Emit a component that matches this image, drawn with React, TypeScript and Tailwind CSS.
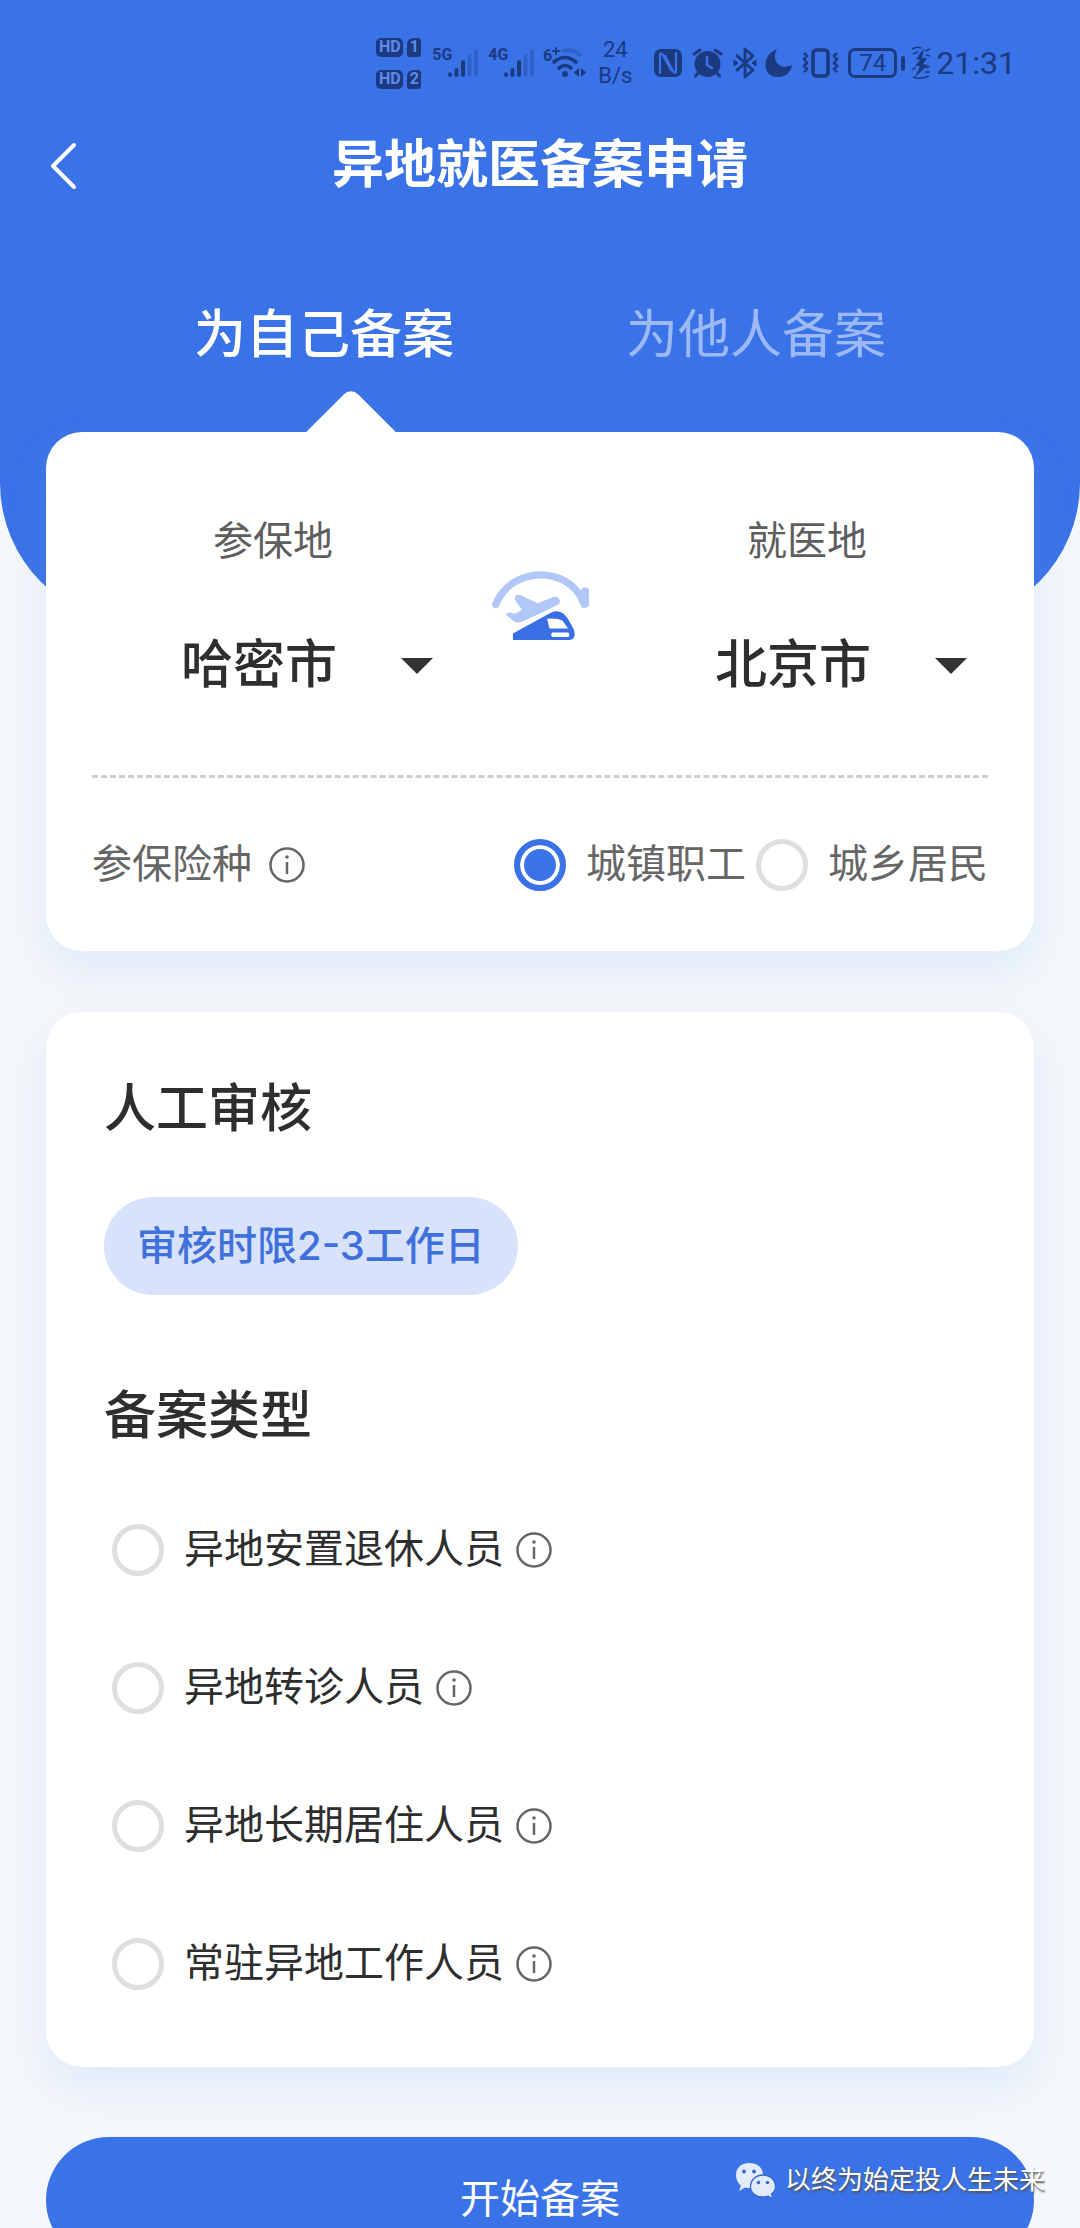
import { useState } from "react";

const INK = "#1b3a80";

function SimBadge({ slot }: { slot: string }) {
  return (
    <div className="flex items-center gap-1 text-[#5f8cec]">
      <span className="flex h-[19px] w-[27px] items-center justify-center rounded-[5px] bg-[#1b3a80] text-[16px] leading-none font-bold">
        HD
      </span>
      <span className="flex h-[19px] w-[14px] items-center justify-center rounded-[3px] rounded-tl-[6px] bg-[#1b3a80] text-[16px] leading-none font-bold">
        {slot}
      </span>
    </div>
  );
}

function Signal({ label }: { label: string }) {
  return (
    <div className="flex w-[47px] items-start">
      <span className="w-[15px] text-[16px] leading-[14px] font-bold">{label}</span>
      <svg width="32" height="30" viewBox="0 0 32 30" aria-hidden="true" strokeWidth="4" strokeLinecap="round" stroke={INK}>
        <path d="M3 26.5V27M9.500 22V27M16 14V27" />
        <path d="M22.500 8V27M29 3V27" opacity=".3" />
      </svg>
    </div>
  );
}

function StatusBar() {
  return (
    <div className="flex h-[126px] items-center justify-end pr-[64px] font-['Roboto',sans-serif] text-[#1b3a80]">
      <div className="mr-[11px] flex flex-col gap-[13px]">
        <SimBadge slot="1" />
        <SimBadge slot="2" />
      </div>
      <div className="mr-[8px] flex gap-[9px]">
        <Signal label="5G" />
        <Signal label="4G" />
      </div>
      <div className="mr-[12px] flex w-[43px] items-start">
        <svg width="43" height="32" viewBox="0 0 43 32" fill="none" stroke={INK} strokeWidth="3.600" strokeLinecap="round" aria-hidden="true">
          <text x="0" y="14" fill={INK} stroke="none" fontSize="16" fontWeight="700">6</text>
          <path d="M13 1V7M10 4H16" strokeWidth="1.800" />
          <path d="M20 4Q30 1 37 8" opacity=".3" />
          <path d="M11 15Q22 6 33 15" />
          <path d="M16 21Q22 16 28 21" />
          <circle cx="22" cy="27" r="3" fill={INK} stroke="none" />
          <path d="M36 21V30L30.500 25.500ZM38 21V30L43 25.500Z" fill={INK} stroke="none" />
        </svg>
      </div>
      <div className="mr-[22px] w-[34px] text-center text-[22px] leading-[26px]">
        24
        <br />
        B/s
      </div>
      <svg className="mr-[10px]" width="28" height="28" viewBox="0 0 28 28" aria-hidden="true">
        <rect width="28" height="28" rx="7" fill={INK} />
        <path d="M6 25V7Q6 2 9 6L17.500 22M22 3V21Q22 26 19 22L10.500 6" fill="none" stroke="#3a72e8" strokeWidth="2.200" strokeLinejoin="round" />
      </svg>
      <svg className="mr-[10px]" width="31" height="30" viewBox="0 0 31 30" aria-hidden="true" strokeLinecap="round" strokeLinejoin="round">
        <circle cx="15.500" cy="16" r="13" fill={INK} />
        <path d="M2 6L8 2M29 6L23 2M6 25L3.500 28M25 25L27.500 28" fill="none" stroke={INK} strokeWidth="3" />
        <path d="M15 9V17L20 20" fill="none" stroke="#3a72e8" strokeWidth="2.600" />
      </svg>
      <svg className="mr-[8px]" width="24" height="32" viewBox="0 0 24 32" fill="none" stroke={INK} strokeWidth="2.800" strokeLinejoin="round" aria-hidden="true">
        <path d="M3 8L20 23L12 30V2L20 9L3 24" />
        <path d="M1 13L5 16L1 19ZM23 13L19 16L23 19Z" fill={INK} strokeWidth="1" />
      </svg>
      <svg className="mr-[9px]" width="28" height="30" viewBox="0 0 28 30" aria-hidden="true">
        <path d="M12 1C-3 6-4 29 13 29C21 29 26 24 27 17C14 23 6 12 12 1Z" fill={INK} />
      </svg>
      <svg className="mr-[9px]" width="37" height="30" viewBox="0 0 37 30" fill="none" stroke={INK} strokeWidth="3.600" strokeLinejoin="round" aria-hidden="true">
        <rect x="11" y="2" width="15" height="26" rx="3.500" />
        <path d="M2 5L5 8L2 11L5 15L2 18L5 21L2 24M35 5L32 8L35 11L32 15L35 18L32 21L35 24" strokeWidth="2.600" />
      </svg>
      <div className="mr-[6px] flex items-center gap-1">
        <span className="flex h-[30px] w-[49px] items-center justify-center rounded-[7px] border-[3px] border-[#1b3a80] text-[24px] leading-none">
          74
        </span>
        <span className="h-[15px] w-[4px] rounded-full bg-[#1b3a80]" />
      </div>
      <svg className="mr-[5px]" width="20" height="34" viewBox="0 0 20 34" aria-hidden="true">
        <path d="M13 2L5 13L9 14L4 20H9L7 25L3 32L17 19L12 18L16 12L11 12Z" fill={INK} />
        <path d="M1 3Q6 0 10 2M2 8L7 6M1 24L5 21M2 31Q9 34 18 30M15 22L19 20M14 26L19 26M15 9L19 10M14 5L19 3" fill="none" stroke={INK} strokeWidth="1.500" />
      </svg>
      <time className="text-[32px] leading-none">21:31</time>
    </div>
  );
}

function InfoButton({ about }: { about: string }) {
  return (
    <button type="button" aria-label={`${about}说明`} className="shrink-0 text-[#666]">
      <svg width="38" height="38" viewBox="0 0 38 38" fill="none" stroke="currentColor" aria-hidden="true">
        <circle cx="19" cy="19" r="16.500" strokeWidth="2.500" />
        <path d="M19 16V28" strokeWidth="2.500" />
        <circle cx="19" cy="11" r="1.800" fill="currentColor" stroke="none" />
      </svg>
    </button>
  );
}

type RadioProps = {
  name: string;
  label: string;
  checked: boolean;
  onSelect: () => void;
};

function Radio({ name, label, checked, onSelect }: RadioProps) {
  return (
    <label className="flex items-center gap-5 whitespace-nowrap">
      <input
        type="radio"
        name={name}
        checked={checked}
        onChange={onSelect}
        className="size-[52px] shrink-0 appearance-none rounded-full border-[5px] border-[#dddfe1] bg-white checked:border-[6px] checked:border-[#3a72e8] checked:bg-[#3a72e8] checked:shadow-[inset_0_0_0_4px_#fff]"
      />
      {label}
    </label>
  );
}

function CityPicker({ id, label, cities }: { id: string; label: string; cities: string[] }) {
  return (
    <div className="flex-1">
      <label htmlFor={id} className="block text-center text-[40px] leading-[60px] text-[#5e5e5e]">
        {label}
      </label>
      <div className="mt-[58px] flex items-center justify-between pr-[21px] pl-[89px]">
        <select id={id} className="h-[72px] appearance-none bg-transparent text-[52px] leading-[72px] font-medium text-[#2e2e2e]">
          {cities.map((city) => (
            <option key={city}>{city}</option>
          ))}
        </select>
        <svg className="pointer-events-none" width="32" height="16" viewBox="0 0 32 16" aria-hidden="true">
          <path d="M0 0H32L16 16Z" fill="#333" />
        </svg>
      </div>
    </div>
  );
}

function TravelIcon() {
  return (
    <svg className="mt-[58px]" width="101" height="73" viewBox="88 86 304 220" aria-hidden="true">
      <path d="M105 190C150 75 320 70 368 180" fill="none" stroke="#b0c7f7" strokeWidth="22" strokeLinecap="round" />
      <path d="M362 144Q374 132 386 144V194Q382 202 366 200L354 178L364 168Z" fill="#b0c7f7" />
      <path
        d="M166 162Q178 158 188 166L232 186L276 168Q294 162 299 180Q298 190 284 195L196 237Q172 249 158 240L138 222Q134 214 148 214L164 218L184 206L162 174Z"
        fill="#b0c7f7"
      />
      <path
        d="M157 277L272 214Q302 202 322 232L340 264Q350 296 326 297H157ZM260 233L267 262H323L306 238Q290 230 260 233ZM276 274Q268 281 276 288H324Q330 281 324 274Z"
        fill="#3a70e6"
        fillRule="evenodd"
      />
    </svg>
  );
}

function Watermark() {
  return (
    <div className="pointer-events-none absolute right-[35px] bottom-[28px] flex h-10 items-center gap-[8px] text-[26px] leading-10 text-white [text-shadow:1px_2px_2px_#555]">
      <svg width="42" height="37" viewBox="0 0 42 37" aria-hidden="true">
        <path d="M6 23L4 29L11 25ZM14 1C6 1 1 6 1 13S6 26 14 26S28 21 28 13S22 1 14 1Z" fill="#e1ebfc" />
        <path d="M28 13C21 13 15.500 18 15.500 24.500S21 35 28 35Q31 35 33 34L38 37L36.500 32Q40.500 29 40.500 24.500C40.500 18 35 13 28 13Z" fill="#e1ebfc" stroke="#3868cc" strokeWidth="1.300" />
        <g fill="#3868cc">
          <circle cx="9" cy="9.500" r="1.900" />
          <circle cx="19" cy="9.500" r="1.900" />
          <circle cx="23.500" cy="20.500" r="1.700" />
          <circle cx="32.500" cy="20.500" r="1.700" />
        </g>
      </svg>
      以终为始定投人生未来
    </div>
  );
}

const INSURANCE = ["城镇职工", "城乡居民"];
const FILING_TYPES = ["异地安置退休人员", "异地转诊人员", "异地长期居住人员", "常驻异地工作人员"];
const TABS = ["为自己备案", "为他人备案"];

export default function App() {
  const [tab, setTab] = useState(0);
  const [insurance, setInsurance] = useState(INSURANCE[0]);
  const [filing, setFiling] = useState("");

  return (
    <div className="relative h-screen overflow-hidden bg-[#f4f7fb] font-['Roboto','Noto_Sans_CJK_SC',sans-serif]">
      <div className="h-full overflow-y-auto [scrollbar-width:none]">
        <header className="rounded-b-[140px] bg-[#3a72e8] pb-[191px] text-white">
          <StatusBar />
          <nav className="grid h-20 grid-cols-[1fr_auto_1fr] items-center px-[46px]">
            <button type="button" aria-label="返回" className="w-fit">
              <svg width="34" height="50" viewBox="0 0 34 50" fill="none" stroke="#fff" strokeWidth="4" strokeLinecap="round" strokeLinejoin="round" aria-hidden="true">
                <path d="M28 4L7 25L28 46" />
              </svg>
            </button>
            <h1 className="text-[52px] leading-[72px] font-bold">异地就医备案申请</h1>
          </nav>
          <div role="tablist" className="flex h-[226px] px-[10%] pt-[94px]">
            {TABS.map((name, i) => (
              <button
                key={name}
                type="button"
                role="tab"
                aria-selected={tab === i}
                onClick={() => setTab(i)}
                className="h-[72px] flex-1 text-[52px] leading-[72px] text-white/50 aria-selected:font-medium aria-selected:text-white"
              >
                {name}
              </button>
            ))}
          </div>
        </header>

        <main className="mt-[-191px] px-[46px] pb-10">
          <section className="relative rounded-[36px] bg-white px-[46px] pt-[80px] shadow-[0_20px_40px_rgba(120,175,235,0.16)]">
            <span className="absolute top-[-30px] left-[269px] size-[72px] rotate-45 rounded-[10px] bg-white" />
            <div className="relative flex">
              <CityPicker id="insured-city" label="参保地" cities={["哈密市", "北京市"]} />
              <div className="flex w-[172px] items-start justify-center">
                <TravelIcon />
              </div>
              <CityPicker id="treatment-city" label="就医地" cities={["北京市", "哈密市"]} />
            </div>
            <div className="mt-[73px] border-t-[3px] border-dashed border-[#cfcfcf]" />
            <div className="flex h-[173px] items-center justify-between text-[40px] leading-[60px] text-[#666]">
              <div className="flex items-center gap-4">
                参保险种
                <InfoButton about="参保险种" />
              </div>
              <div className="flex items-center gap-[10px]">
                {INSURANCE.map((name) => (
                  <Radio key={name} name="insurance" label={name} checked={insurance === name} onSelect={() => setInsurance(name)} />
                ))}
              </div>
            </div>
          </section>

          <section className="mt-[61px] rounded-[36px] bg-white px-[58px] pt-[62px] pb-[34px] text-[#2e2e2e] shadow-[0_20px_40px_rgba(120,175,235,0.16)]">
            <h2 className="text-[52px] leading-[72px] font-medium">人工审核</h2>
            <p className="mt-[51px] flex h-[98px] w-fit items-center rounded-full bg-[#d8e2fa] px-[33px] font-['Inter','Noto_Sans_CJK_SC',sans-serif] text-[40px] leading-[60px] font-medium text-[#3f70dc]">
              审核时限2-3工作日
            </p>
            <h2 className="mt-[86px] text-[52px] leading-[72px] font-medium">备案类型</h2>
            <ul className="mt-[28px] pl-2 text-[40px] leading-[60px]">
              {FILING_TYPES.map((name) => (
                <li key={name} className="flex h-[138px] items-center gap-[11px]">
                  <Radio name="filing" label={name} checked={filing === name} onSelect={() => setFiling(name)} />
                  <InfoButton about={name} />
                </li>
              ))}
            </ul>
          </section>

          <button type="button" className="mt-[70px] h-[126px] w-full rounded-full bg-[#3a72e8] text-[40px] leading-[60px] text-white">
            开始备案
          </button>
        </main>
      </div>
      <Watermark />
    </div>
  );
}
